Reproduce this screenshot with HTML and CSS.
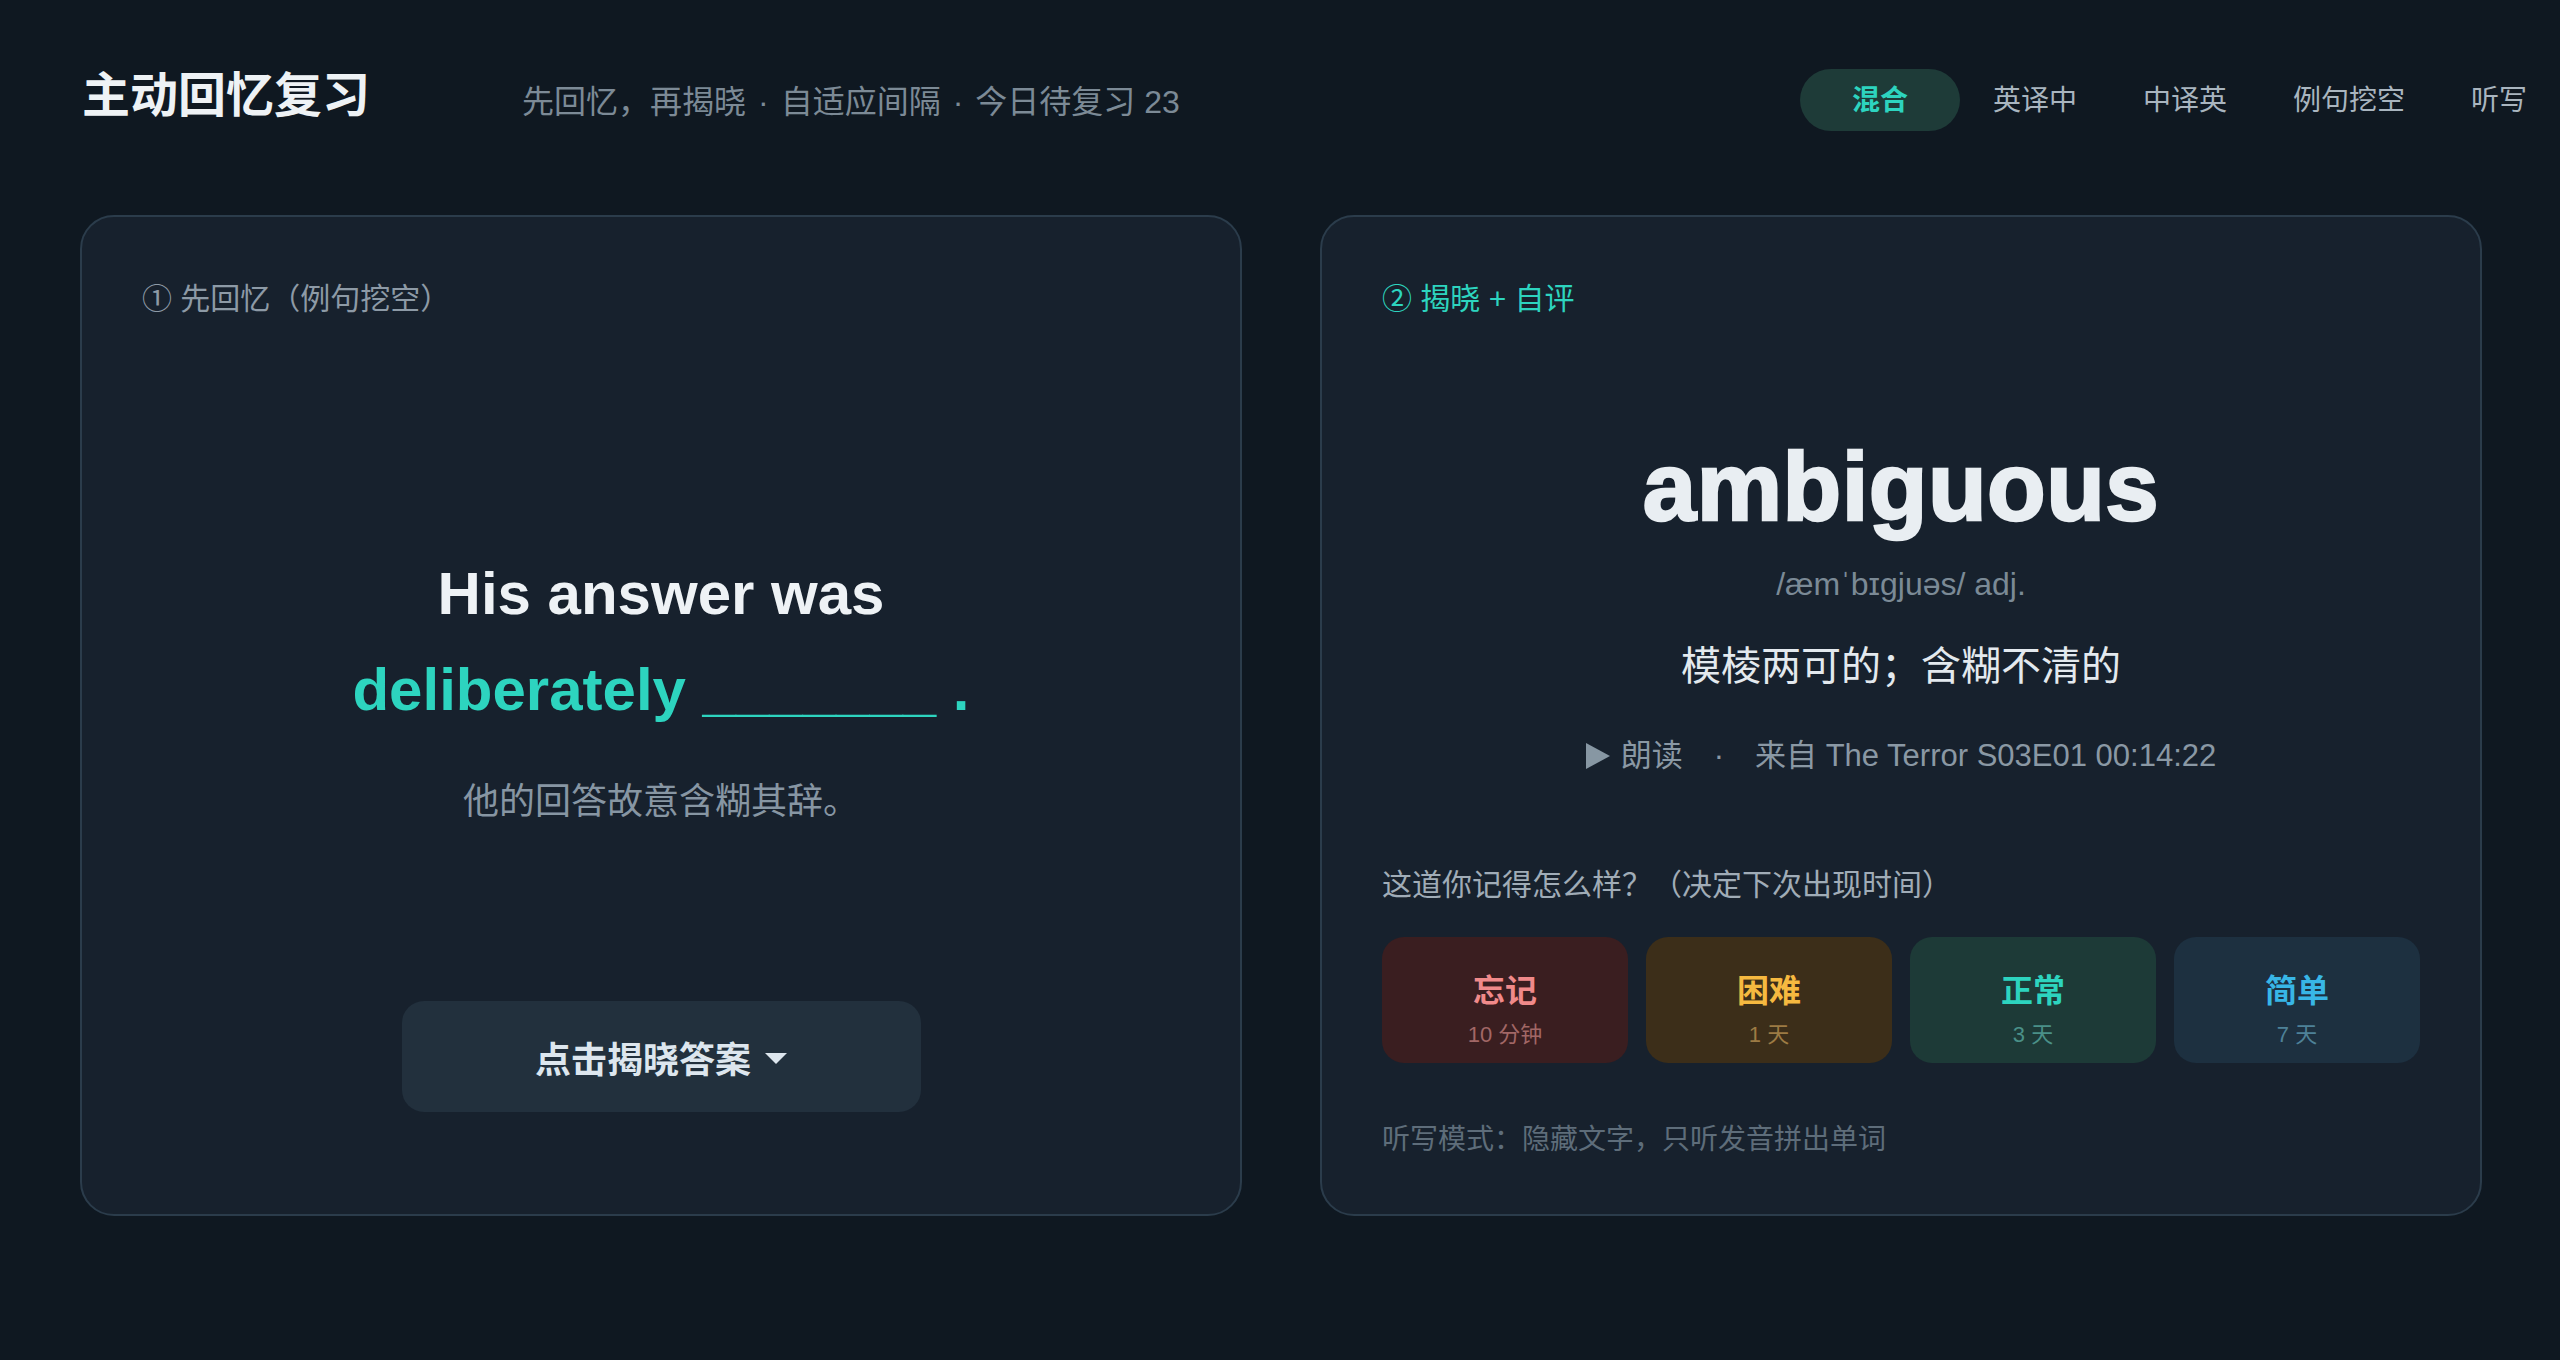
FILE: index.html
```html
<!DOCTYPE html>
<html lang="zh-CN">
<head>
<meta charset="utf-8">
<title>主动回忆复习</title>
<link rel="stylesheet" href="styles.css">
</head>
<body>
<div class="page">
  <header class="header">
    <h1 class="title">主动回忆复习</h1>
    <div class="subtitle">先回忆，再揭晓<span class="sep">·</span>自适应间隔<span class="sep">·</span>今日待复习 23</div>
    <nav class="tabs">
      <span class="tab active">混合</span>
      <span class="tab">英译中</span>
      <span class="tab">中译英</span>
      <span class="tab">例句挖空</span>
      <span class="tab">听写</span>
    </nav>
  </header>

  <main class="board">
    <section class="card recall">
      <div class="label">① 先回忆（例句挖空）</div>
      <div class="sentence">
        <div class="line">His answer was</div>
        <div class="line hl">deliberately _______ .</div>
      </div>
      <div class="translation">他的回答故意含糊其辞。</div>
      <button class="reveal">点击揭晓答案<span class="caret"></span></button>
    </section>

    <section class="card answer">
      <div class="label teal">② 揭晓 + 自评</div>
      <div class="word">ambiguous</div>
      <div class="phonetic">/æmˈbɪɡjuəs/ adj.</div>
      <div class="definition">模棱两可的；含糊不清的</div>
      <div class="audio">
        <span class="play"><svg width="24" height="26" viewBox="0 0 24 26"><polygon points="0,0 24,13 0,26" fill="#8797a3"/></svg>朗读</span>
        <span class="dot">·</span>
        <span>来自 The Terror S03E01 00:14:22</span>
      </div>
      <div class="question">这道你记得怎么样？（决定下次出现时间）</div>
      <div class="ratings">
        <div class="rate forgot"><span class="rt">忘记</span><span class="rs">10 分钟</span></div>
        <div class="rate hard"><span class="rt">困难</span><span class="rs">1 天</span></div>
        <div class="rate normal"><span class="rt">正常</span><span class="rs">3 天</span></div>
        <div class="rate easy"><span class="rt">简单</span><span class="rs">7 天</span></div>
      </div>
      <div class="note">听写模式：隐藏文字，只听发音拼出单词</div>
    </section>
  </main>
</div>
</body>
</html>
```
FILE: styles.css
```css
* { box-sizing: border-box; }
html, body { margin: 0; padding: 0; }
body {
  background: #0f1821;
  font-family: "Liberation Sans", "Noto Sans CJK SC", sans-serif;
  color: #e6ecf1;
  width: 2560px;
  height: 1360px;
  overflow: hidden;
}
.page { padding: 69px 0 0 0; }

.header {
  display: flex;
  align-items: center;
  height: 62px;
  padding-left: 82px;
}
.title {
  margin: 0;
  font-size: 48px;
  font-weight: 700;
  color: #eef2f5;
  line-height: 62px;
  position: relative;
  top: -4px;
}
.subtitle {
  margin-left: 152px;
  font-size: 32px;
  color: #7c8a96;
  position: relative;
  top: -1px;
}
.subtitle .sep { margin: 0 12px; }
.tabs {
  margin-left: auto;
  display: flex;
}
.tab {
  height: 62px;
  line-height: 64px;
  padding: 0 33px;
  font-size: 28px;
  color: #a9b5bf;
  border-radius: 31px;
}
.tab.active {
  background: #1e3b38;
  color: #2dd4bf;
  font-weight: 700;
  padding: 0 52px;
}

.board {
  display: grid;
  grid-template-columns: 1fr 1fr;
  gap: 78px;
  padding: 0 78px 0 80px;
  margin-top: 84px;
}
.card {
  height: 1001px;
  background: #17212d;
  border: 2px solid #2b3c4b;
  border-radius: 34px;
  padding: 60px 60px 0 60px;
  display: flex;
  flex-direction: column;
}
.label {
  font-size: 30px;
  line-height: 44px;
  color: #8d9aa6;
}
.label.teal { color: #2dd4bf; }

.sentence {
  margin-top: 225px;
  text-align: center;
  font-size: 60px;
  font-weight: 700;
  line-height: 96px;
  color: #eef2f5;
}
.sentence .hl { color: #2dd4bf; }
.translation {
  margin-top: 40px;
  text-align: center;
  font-size: 36px;
  line-height: 48px;
  color: #8796a3;
}
.reveal {
  margin-top: 175px;
  align-self: center;
  width: 519px;
  height: 111px;
  border: none;
  border-radius: 22px;
  background: #22303d;
  color: #dde6ee;
  font-family: inherit;
  font-size: 36px;
  font-weight: 700;
  display: flex;
  align-items: center;
  justify-content: center;
}
.caret {
  width: 0;
  height: 0;
  margin-left: 14px;
  margin-top: 4px;
  border-left: 11px solid transparent;
  border-right: 11px solid transparent;
  border-top: 11px solid #dde6ee;
}

.word {
  margin-top: 111px;
  text-align: center;
  font-size: 96px;
  font-weight: 700;
  letter-spacing: 0.5px;
  line-height: 110px;
  color: #e9eef2;
  -webkit-text-stroke: 2.5px #e9eef2;
}
.phonetic {
  margin-top: 22px;
  text-align: center;
  font-size: 32px;
  line-height: 40px;
  color: #7b8a96;
}
.definition {
  margin-top: 34px;
  text-align: center;
  font-size: 40px;
  line-height: 56px;
  color: #e3e9ee;
}
.audio {
  margin-top: 42px;
  display: flex;
  justify-content: center;
  align-items: center;
  font-size: 31px;
  line-height: 40px;
  color: #8a98a4;
}
.play { display: flex; align-items: center; gap: 11px; }
.dot { margin: 0 31px; }

.question {
  margin-top: 89px;
  font-size: 30px;
  line-height: 40px;
  color: #a0acb7;
}
.ratings {
  margin-top: 32px;
  display: grid;
  grid-template-columns: repeat(4, 1fr);
  gap: 18px;
}
.rate {
  height: 126px;
  border-radius: 22px;
  display: flex;
  flex-direction: column;
  align-items: center;
  padding-top: 34px;
  gap: 9px;
}
.rt { font-size: 32px; font-weight: 700; line-height: 40px; }
.rs { font-size: 22px; line-height: 30px; }
.forgot { background: #3a1e20; }
.forgot .rt { color: #f08a8a; }
.forgot .rs { color: #a26766; }
.hard { background: #3c2e19; }
.hard .rt { color: #f6b940; }
.hard .rs { color: #9c7b44; }
.normal { background: #1d3a37; }
.normal .rt { color: #2dd4bf; }
.normal .rs { color: #4a9088; }
.easy { background: #1d3040; }
.easy .rt { color: #38b6e6; }
.easy .rs { color: #4e8198; }

.note {
  margin-top: 59px;
  font-size: 28px;
  line-height: 36px;
  color: #5e6d7a;
}
```
